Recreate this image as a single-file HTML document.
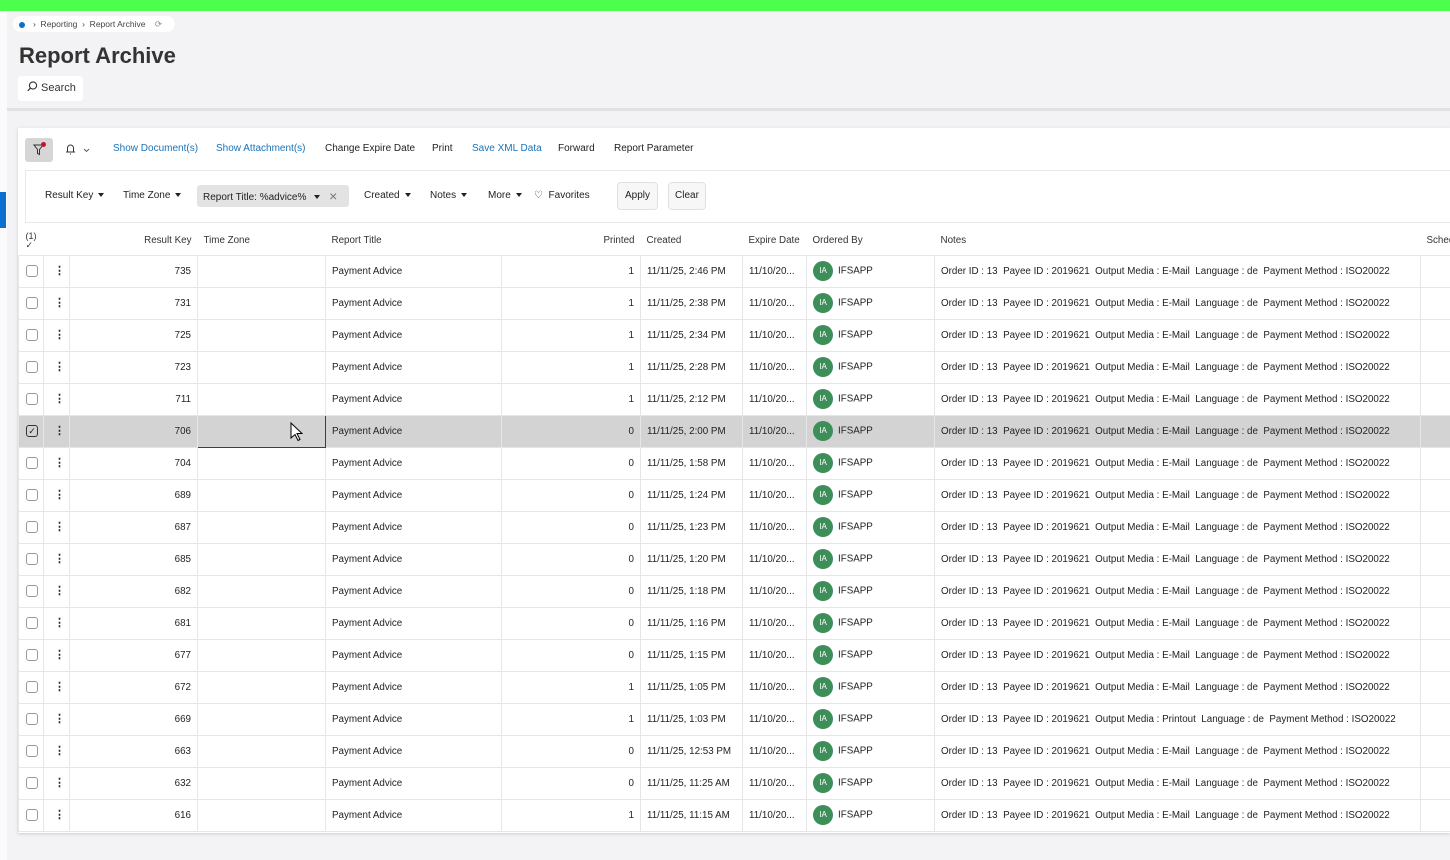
<!DOCTYPE html>
<html><head><meta charset="utf-8"><style>
*{box-sizing:border-box;margin:0;padding:0}
body{width:1450px;height:860px;overflow:hidden;background:#f3f2f4;font-family:"Liberation Sans",sans-serif;color:#222;position:relative}
.abs{position:absolute}
.green{left:0;top:0;width:1450px;height:11px;background:#4dff4d}
.lstrip{left:0;top:11px;width:7px;height:849px;background:#fbfbfb}
.bluem{left:0;top:192px;width:6px;height:36px;background:#0a6fd1}
.crumb{left:13px;top:16px;height:16px;background:#fff;border-radius:8px;width:162px;font-size:8.5px;color:#444;line-height:16px;padding-left:6px}
.crumb .dot{display:inline-block;width:6px;height:6px;border-radius:50%;background:#0a6fd1;margin-right:8px;vertical-align:-0.5px}
h1{position:absolute;left:19px;top:43px;font-size:22px;font-weight:bold;color:#333}
.search{left:18px;top:76px;width:65px;height:25px;background:#fff;border-radius:3px;font-size:11px;line-height:25px;padding-left:9px;color:#333}
.hline{left:7px;top:108px;width:1443px;height:3px;background:#e1e0e3}
.card{left:18px;top:128px;width:1432px;height:705px;background:#fff;box-shadow:0 1px 3px #ccc}
.tb{font-size:10px;line-height:12px;top:143px}
.blue{color:#1a73b8}
.fbtn{left:25px;top:138px;width:28px;height:24px;background:#d6d6d6;border-radius:3px}
.fbox{left:25px;top:170px;width:1425px;height:53px;border:1px solid #e8e8e8;border-right:none}
.f{font-size:10px;top:190px;line-height:12px}
.chip{left:197px;top:185px;width:152px;height:22px;background:#e3e3e3;border-radius:3px}
.btn{top:182px;height:28px;border:1px solid #e0e0e0;border-radius:4px;background:#f7f7f7;font-size:10px;line-height:26px;text-align:center}
.tri{display:inline-block;border-left:3.5px solid transparent;border-right:3.5px solid transparent;border-top:4px solid #222;vertical-align:1px;margin-left:5px}
table{position:absolute;left:18px;top:227px;width:1442px;border-collapse:collapse;table-layout:fixed;font-size:9.8px}
td,th{height:32px;border:1px solid #e6e6e6;white-space:nowrap;overflow:hidden;padding:0 6px;font-weight:normal}
thead th{height:28px;border:none;border-bottom:1px solid #e6e6e6;text-align:left;color:#333}
tr.sel td{background:#d3d3d3}
.r{text-align:right}
.cb{display:inline-block;width:12px;height:12px;border:1px solid #999;border-radius:3px;vertical-align:middle;background:#fff}
.dots{font-weight:bold;font-size:11px;line-height:8px;letter-spacing:0}
.av{display:inline-block;width:20px;height:20px;border-radius:50%;background:#3d8f5a;color:#fff;font-size:8px;line-height:20px;text-align:center;vertical-align:middle;margin-right:5px}
</style></head><body>
<div class="abs green"></div>
<div class="abs lstrip"></div>
<div class="abs bluem"></div>
<div class="abs crumb"><span class="dot"></span>›&nbsp; Reporting&nbsp; ›&nbsp; Report Archive&nbsp;&nbsp;&nbsp; <span style="color:#888">⟳</span></div>
<h1>Report Archive</h1>
<div class="abs search"><svg width="11" height="11" viewBox="0 0 11 11" style="vertical-align:-1px"><circle cx="6" cy="4.5" r="3.6" fill="none" stroke="#333" stroke-width="1.1"/><path d="M3.4 7.2L0.8 9.8" stroke="#333" stroke-width="1.2"/></svg> Search</div>
<div class="abs hline"></div>
<div class="abs card"></div>
<div class="abs fbtn"><svg width="28" height="24" viewBox="0 0 28 24"><path d="M9 7h9l-3.5 4.5v5l-2 -1v-4z" fill="none" stroke="#333" stroke-width="1"/><circle cx="18.5" cy="6.5" r="2.5" fill="#c8102e"/></svg></div>
<div class="abs" style="left:64px;top:142px"><svg width="30" height="14" viewBox="0 0 30 14"><path d="M2 10h9M3.5 10V6a3 3 0 0 1 6 0v4M6.5 11.5v1" fill="none" stroke="#333" stroke-width="1"/><path d="M20 7l2.5 2.5L25 7" fill="none" stroke="#555" stroke-width="0.9"/></svg></div>
<div class="abs tb blue" style="left:113px">Show Document(s)</div>
<div class="abs tb blue" style="left:216px">Show Attachment(s)</div>
<div class="abs tb" style="left:325px">Change Expire Date</div>
<div class="abs tb" style="left:432px">Print</div>
<div class="abs tb blue" style="left:472px">Save XML Data</div>
<div class="abs tb" style="left:558px">Forward</div>
<div class="abs tb" style="left:614px">Report Parameter</div>
<div class="abs fbox"></div>
<div class="abs chip"></div>
<div class="abs f" style="left:45px">Result Key<span class="tri"></span></div>
<div class="abs f" style="left:123px">Time Zone<span class="tri"></span></div>
<div class="abs f" style="left:203px">Report Title: %advice%<span class="tri" style="margin-left:8px"></span> <span style="color:#777;font-size:14px;margin-left:6px;vertical-align:-1px">×</span></div>
<div class="abs f" style="left:364px">Created<span class="tri"></span></div>
<div class="abs f" style="left:430px">Notes<span class="tri"></span></div>
<div class="abs f" style="left:488px">More<span class="tri"></span></div>
<div class="abs f" style="left:534px">♡&nbsp; Favorites</div>
<div class="abs btn" style="left:617px;width:41px">Apply</div>
<div class="abs btn" style="left:668px;width:38px">Clear</div>
<table>
<colgroup><col style="width:25px"><col style="width:26px"><col style="width:128px"><col style="width:128px"><col style="width:176px"><col style="width:139px"><col style="width:102px"><col style="width:64px"><col style="width:128px"><col style="width:486px"><col style="width:40px"></colgroup>
<thead><tr><th style="padding:0 0 0 7px;font-size:9px;line-height:9px">(1)<br>✓</th><th></th><th class="r">Result Key</th><th>Time Zone</th><th>Report Title</th><th class="r">Printed</th><th>Created</th><th>Expire Date</th><th>Ordered By</th><th>Notes</th><th>Sched</th></tr></thead>
<tbody id="tb">
</tbody></table>
<script>
var d=[[735,1,"2:46 PM"],[731,1,"2:38 PM"],[725,1,"2:34 PM"],[723,1,"2:28 PM"],[711,1,"2:12 PM"],[706,0,"2:00 PM"],[704,0,"1:58 PM"],[689,0,"1:24 PM"],[687,0,"1:23 PM"],[685,0,"1:20 PM"],[682,0,"1:18 PM"],[681,0,"1:16 PM"],[677,0,"1:15 PM"],[672,1,"1:05 PM"],[669,1,"1:03 PM"],[663,0,"12:53 PM"],[632,0,"11:25 AM"],[616,1,"11:15 AM"]];
var h="";d.forEach(function(r){var sel=r[0]==706;var media=r[0]==669?"Printout":"E-Mail";
h+='<tr'+(sel?' class="sel"':'')+'><td style="padding:0 0 0 7px"><span class="cb"'+(sel?' style="border-color:#333;background:#d3d3d3;text-align:center;font-size:9px;line-height:10px">✓':'>')+'</span></td><td class="dots" style="padding-left:10px">⋮</td><td class="r">'+r[0]+'</td><td'+(sel?' style="border:1px solid #2a3f6a;position:relative"><svg width="14" height="20" style="position:absolute;left:92px;top:6px" viewBox="0 0 14 20"><path d="M1 1v15l4-3.5 3 6 2-1-3-6h5z" fill="#fff" stroke="#000" stroke-width="1"/></svg>':'>')+'</td><td>Payment Advice</td><td class="r">'+r[1]+'</td><td>11/11/25, '+r[2]+'</td><td>11/10/20...</td><td><span class="av">IA</span>IFSAPP</td><td>Order ID : 13&nbsp; Payee ID : 2019621&nbsp; Output Media : '+media+'&nbsp; Language : de&nbsp; Payment Method : ISO20022</td><td></td></tr>';});
document.getElementById("tb").innerHTML=h;
</script>
</body></html>
